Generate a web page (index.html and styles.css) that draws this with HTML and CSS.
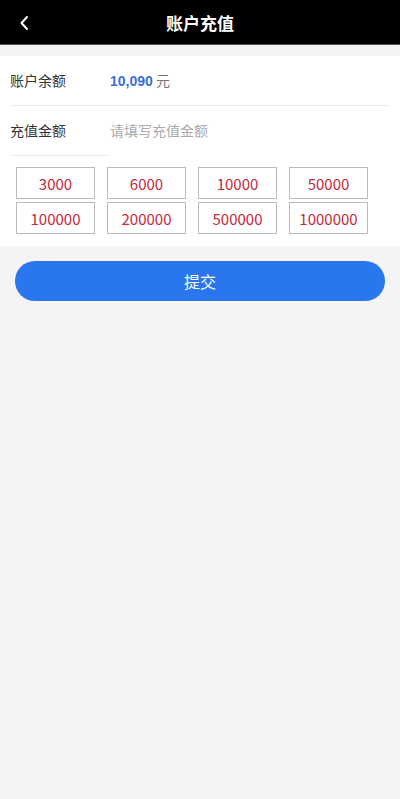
FILE: index.html
```html
<!DOCTYPE html>
<html lang="zh">
<head>
<meta charset="utf-8">
<meta name="viewport" content="width=device-width, initial-scale=1">
<title>账户充值</title>
<link rel="stylesheet" href="styles.css">
</head>
<body>
<header class="topbar">
  <span class="back">
    <svg width="10" height="16" viewBox="0 0 10 16"><path d="M8 2 L2.5 8 L8 14" fill="none" stroke="#fff" stroke-width="2" stroke-linecap="round" stroke-linejoin="round"/></svg>
  </span>
  <h1 class="title">账户充值</h1>
</header>
<main class="panel">
  <div class="row row-full">
    <span class="label">账户余额</span>
    <span class="value"><b class="amount">10,090</b> <span class="unit">元</span></span>
  </div>
  <div class="row row-short">
    <span class="label">充值金额</span>
    <span class="placeholder">请填写充值金额</span>
  </div>
  <div class="chips">
    <span class="chip">3000</span>
    <span class="chip">6000</span>
    <span class="chip">10000</span>
    <span class="chip">50000</span>
    <span class="chip">100000</span>
    <span class="chip">200000</span>
    <span class="chip">500000</span>
    <span class="chip">1000000</span>
  </div>
</main>
<div class="actions">
  <button class="submit">提交</button>
</div>
</body>
</html>
```

FILE: styles.css
```css
* { box-sizing: border-box; }
html, body {
  margin: 0;
  padding: 0;
  background: #f4f4f4;
  font-family: "Noto Sans CJK SC", "Noto Sans", sans-serif;
}
.topbar {
  height: 45px;
  background: #000;
  border-bottom: 1px solid #555;
  display: flex;
  align-items: center;
  justify-content: center;
  position: relative;
}
.back {
  position: absolute;
  left: 19px;
  top: 15px;
  display: flex;
}
.title {
  margin: 0;
  color: #fff;
  font-size: 17px;
  font-weight: 700;
  line-height: 1;
}
.panel {
  margin-top: 11px;
  background: #fff;
  padding: 0 10px 12px;
}
.row {
  height: 50px;
  display: flex;
  align-items: center;
  padding-bottom: 2px;
  font-size: 14px;
  border-bottom: 1px solid #ececec;
}
.row-short {
  width: 100px;
  overflow: visible;
  white-space: nowrap;
}
.label {
  width: 100px;
  flex: none;
  color: #333;
}
.amount {
  color: #3a6fd6;
  font-weight: 700;
  font-family: "Liberation Sans", "Noto Sans", sans-serif;
  font-size: 14px;
}
.unit { color: #777; }
.placeholder { color: #aaa; }
.chips {
  display: grid;
  grid-template-columns: repeat(4, 79px);
  column-gap: 12px;
  row-gap: 3px;
  padding: 11px 0 0 6px;
}
.chip {
  height: 32px;
  border: 1px solid #bbb;
  color: #c8283c;
  font-size: 15px;
  display: flex;
  align-items: center;
  justify-content: center;
}
.actions {
  padding: 15px 15px 0;
}
.submit {
  display: block;
  width: 100%;
  height: 40px;
  border: 0;
  border-radius: 20px;
  background: #2a76ee;
  color: #fff;
  font-size: 16px;
  font-family: "Noto Sans CJK SC", sans-serif;
}
```
